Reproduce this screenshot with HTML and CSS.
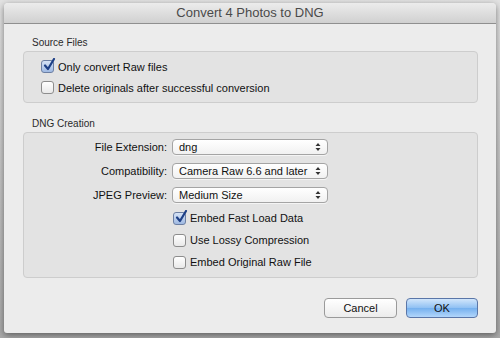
FILE: index.html
```html
<!DOCTYPE html>
<html lang="en">
<head>
  <meta charset="UTF-8" />
  <title>Convert 4 Photos to DNG</title>
  <link rel="stylesheet" href="styles.css">
</head>
<body>
  <div class="window">
    <div class="titlebar">Convert 4 Photos to DNG</div>
    <div class="content">
      <div class="legend">Source Files</div>
      <div class="group group-source">
        <div class="check-row">
          <span class="box checked">
            <svg width="14" height="14" viewBox="0 0 14 14"><path d="M3 7.5 L6 11 L12 1" fill="none" stroke="#1d3f86" stroke-width="2.2" stroke-linecap="round" stroke-linejoin="round"/></svg>
          </span>
          <span>Only convert Raw files</span>
        </div>
        <div class="check-row">
          <span class="box"></span>
          <span>Delete originals after successful conversion</span>
        </div>
      </div>

      <div class="legend legend-dng">DNG Creation</div>
      <div class="group group-dng">
        <div class="field-row">
          <label>File Extension:</label>
          <div class="popup">
            <span>dng</span>
            <svg width="6" height="10" viewBox="0 0 6 10"><path d="M0.5 4 L3 1 L5.5 4 Z M0.5 6 L3 9 L5.5 6 Z" fill="#333"/></svg>
          </div>
        </div>
        <div class="field-row">
          <label>Compatibility:</label>
          <div class="popup">
            <span>Camera Raw 6.6 and later</span>
            <svg width="6" height="10" viewBox="0 0 6 10"><path d="M0.5 4 L3 1 L5.5 4 Z M0.5 6 L3 9 L5.5 6 Z" fill="#333"/></svg>
          </div>
        </div>
        <div class="field-row">
          <label>JPEG Preview:</label>
          <div class="popup">
            <span>Medium Size</span>
            <svg width="6" height="10" viewBox="0 0 6 10"><path d="M0.5 4 L3 1 L5.5 4 Z M0.5 6 L3 9 L5.5 6 Z" fill="#333"/></svg>
          </div>
        </div>
        <div class="check-row indented">
          <span class="box checked">
            <svg width="14" height="14" viewBox="0 0 14 14"><path d="M3 7.5 L6 11 L12 1" fill="none" stroke="#1d3f86" stroke-width="2.2" stroke-linecap="round" stroke-linejoin="round"/></svg>
          </span>
          <span>Embed Fast Load Data</span>
        </div>
        <div class="check-row indented">
          <span class="box"></span>
          <span>Use Lossy Compression</span>
        </div>
        <div class="check-row indented">
          <span class="box"></span>
          <span>Embed Original Raw File</span>
        </div>
      </div>

      <div class="buttons">
        <button class="btn">Cancel</button>
        <button class="btn btn-default">OK</button>
      </div>
    </div>
  </div>
</body>
</html>
```

FILE: styles.css
```css
body {
  margin: 0;
  height: 338px;
  overflow: hidden;
  background: linear-gradient(#e2e2e2, #a9a9a9);
  font-family: "Liberation Sans", Arial, sans-serif;
  color: #111;
}
.window {
  margin: 3px 4px 0 4px;
  width: 492px;
  height: 330px;
  background: #ececec;
  border-radius: 4px 4px 3px 3px;
  box-shadow: 0 2px 6px rgba(0,0,0,0.45);
  overflow: hidden;
}
.titlebar {
  height: 20px;
  line-height: 20px;
  text-align: center;
  font-size: 13px;
  color: #4a4a4a;
  background: linear-gradient(#ececec, #d0d0d0);
  border-bottom: 1px solid #8f8f8f;
}
.content {
  padding: 13px 18px 0 19px;
}
.legend {
  font-size: 10px;
  line-height: 12px;
  margin-left: 9px;
  margin-bottom: 2px;
  color: #2a2a2a;
}
.legend-dng {
  margin-top: 15px;
}
.group {
  background: #e3e3e3;
  border: 1px solid #cdcdcd;
  border-radius: 4px;
}
.group-source {
  padding: 4px 0 4px 17px;
}
.group-dng {
  padding: 2px 0 4px 0;
}
.check-row {
  display: flex;
  align-items: center;
  height: 21px;
  font-size: 11px;
}
.group-dng .check-row {
  height: 22px;
}
.check-row.indented {
  padding-left: 149px;
}
.box {
  position: relative;
  width: 11px;
  height: 11px;
  border: 1px solid #8d8d8d;
  border-radius: 3px;
  background: linear-gradient(#ffffff, #e9e9e9);
  margin-right: 4px;
  flex-shrink: 0;
}
.box.checked {
  background: linear-gradient(#d5e2f5, #9fb9e2);
  border-color: #6c7fa3;
}
.box svg {
  position: absolute;
  left: 0;
  top: -3px;
}
.field-row {
  display: flex;
  align-items: center;
  height: 24px;
  font-size: 11px;
}
.field-row label {
  width: 143px;
  text-align: right;
  margin-right: 5px;
}
.popup {
  display: flex;
  align-items: center;
  justify-content: space-between;
  box-sizing: border-box;
  width: 156px;
  height: 16px;
  padding: 0 6px 0 6px;
  background: linear-gradient(#ffffff, #f1f1f1);
  border: 1px solid #a4a4a4;
  border-radius: 4px;
  box-shadow: 0 1px 0 rgba(255,255,255,0.6);
}
.buttons {
  display: flex;
  justify-content: flex-end;
  gap: 9px;
  margin-top: 20px;
}
.btn {
  width: 73px;
  height: 20px;
  font-family: "Liberation Sans", Arial, sans-serif;
  font-size: 11px;
  color: #111;
  background: linear-gradient(#ffffff, #ececec);
  border: 1px solid #9a9a9a;
  border-radius: 4px;
  padding: 0;
}
.btn-default {
  width: 72px;
  background: linear-gradient(#d2e6fb, #8fc0f3 50%, #75b0ee 51%, #b2d6fb);
  border-color: #5a76a8;
}
```
